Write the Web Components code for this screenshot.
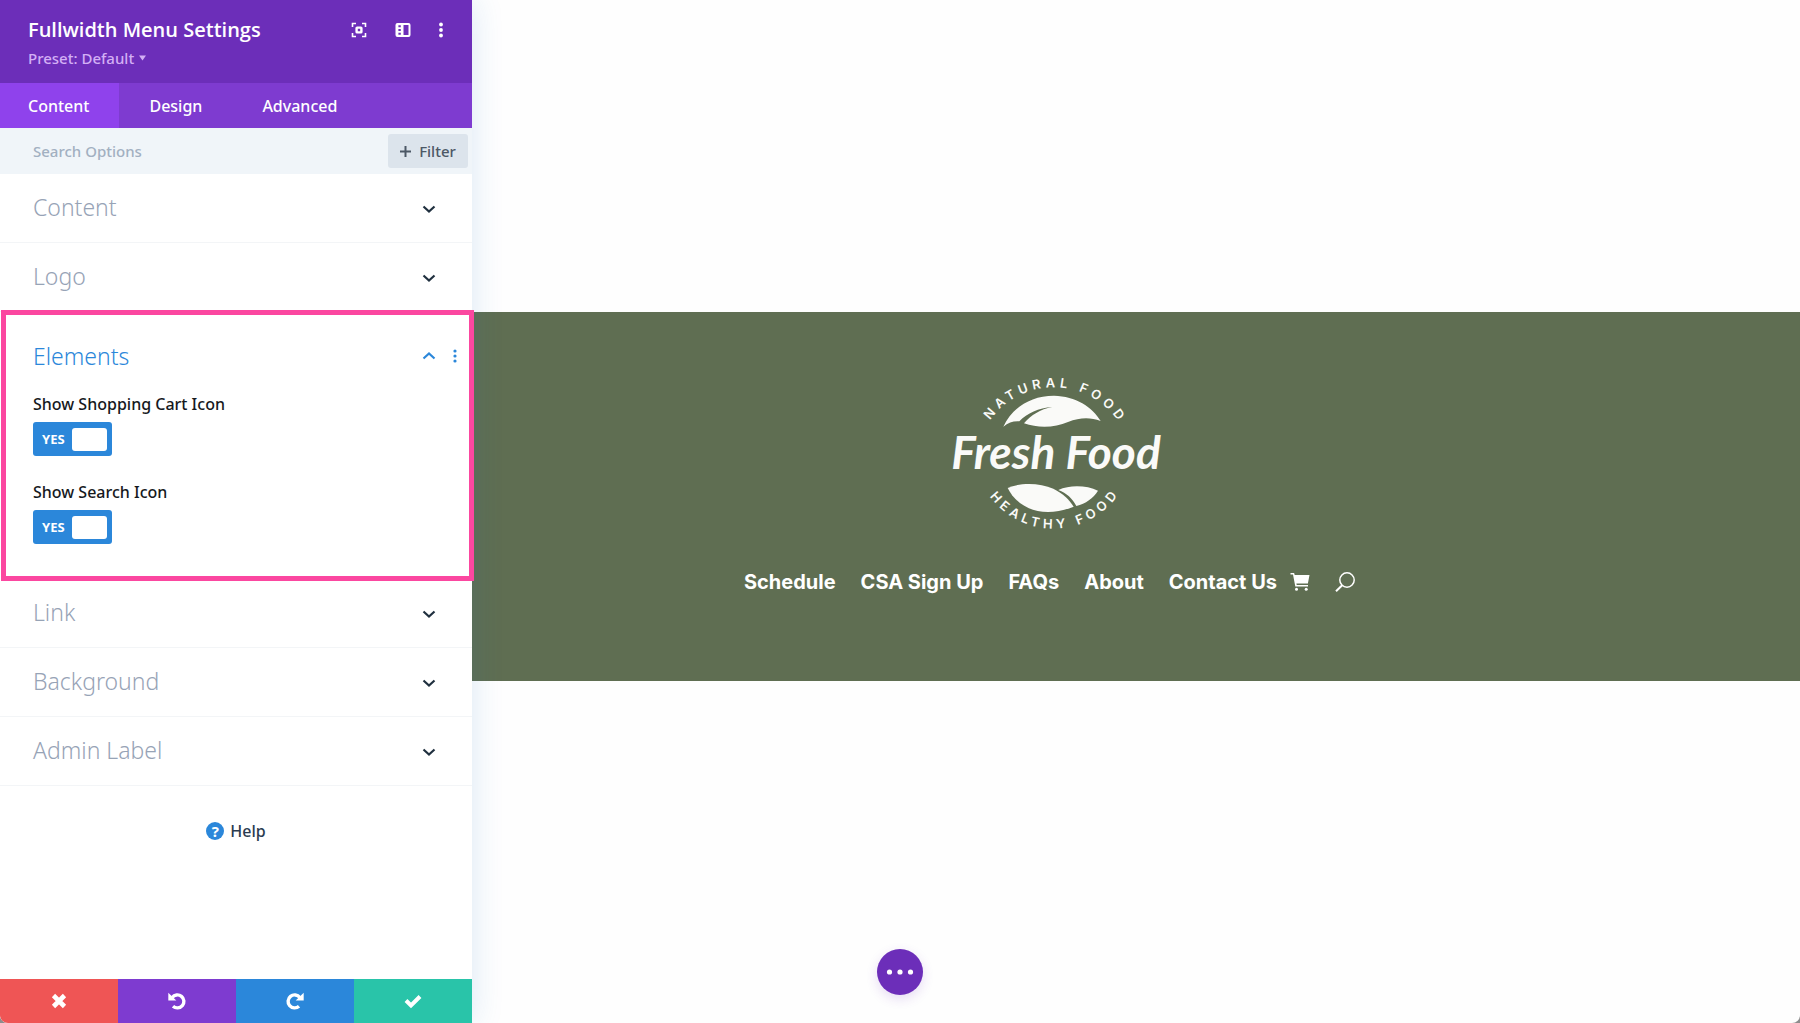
<!DOCTYPE html>
<html lang="en">
<head>
<meta charset="utf-8">
<meta name="viewport" content="width=device-width, initial-scale=1">
<title>Fullwidth Menu Settings</title>
<style>
  body {
    margin: 0;
    background: #8d8d8d;
    font-family: "Noto Sans", "Open Sans", sans-serif;
  }
</style>
</head>
<body>
<builder-app>
  <settings-panel slot="panel" heading="Fullwidth Menu Settings" preset="Default">
    <option-group label="Content"></option-group>
    <option-group label="Logo"></option-group>
    <option-group label="Elements" open>
      <yes-no-toggle label="Show Shopping Cart Icon"></yes-no-toggle>
      <yes-no-toggle label="Show Search Icon"></yes-no-toggle>
    </option-group>
    <option-group label="Link"></option-group>
    <option-group label="Background"></option-group>
    <option-group label="Admin Label"></option-group>
  </settings-panel>
  <fullwidth-menu>
    <brand-logo slot="logo"></brand-logo>
    <menu-link>Schedule</menu-link>
    <menu-link>CSA Sign Up</menu-link>
    <menu-link>FAQs</menu-link>
    <menu-link>About</menu-link>
    <menu-link>Contact Us</menu-link>
  </fullwidth-menu>
</builder-app>

<script>
class BuilderApp extends HTMLElement {
    constructor() {
        super();
        this.attachShadow({ mode: 'open' });
    }

    connectedCallback() {
        this.shadowRoot.innerHTML = `
      <style>
        :host {
          display: flex;
          min-height: 100vh;
          background: #fefefe;
          border-radius: 0 0 8px 8px;
          overflow: hidden;
        }

        ::slotted([slot="panel"]) {
          flex: 0 0 472px;
          z-index: 1;
        }

        main {
          flex: 1;
          min-width: 0;
          padding-top: 312px;
        }

        .more {
          position: fixed;
          bottom: 28px;
          left: 50%;
          margin-left: -23px;
          width: 46px;
          height: 46px;
          padding: 0;
          border: 0;
          border-radius: 50%;
          background: #6c2eb9;
          box-shadow: 0 4px 12px rgba(108, 46, 185, 0.16);
          z-index: 2;
        }

        .more svg {
          display: block;
        }
      </style>

      <slot name="panel"></slot>
      <main><slot></slot></main>
      <button class="more" aria-label="Builder options">
        <svg width="46" height="46" fill="#fff" aria-hidden="true">
          <circle cx="12.5" cy="23" r="2.6"/><circle cx="23" cy="23" r="2.6"/><circle cx="33.5" cy="23" r="2.6"/>
        </svg>
      </button>
    `;
    }
}

class SettingsPanel extends HTMLElement {
    constructor() {
        super();
        this.attachShadow({ mode: 'open' });
    }

    connectedCallback() {
        const heading = this.getAttribute('heading') || 'Settings';
        const preset = this.getAttribute('preset') || 'Default';

        this.shadowRoot.innerHTML = `
      <style>
        :host {
          display: flex;
          flex-direction: column;
          background: #fff;
          box-shadow: 0 0 30px rgba(30, 120, 200, 0.16);
        }

        button {
          font: inherit;
          color: inherit;
          border: 0;
          padding: 0;
          background: none;
          cursor: pointer;
        }

        svg {
          display: block;
        }

        header {
          display: flex;
          justify-content: space-between;
          align-items: flex-start;
          box-sizing: border-box;
          height: 83px;
          padding: 16px 29px 0 28px;
          background: #6c2eb9;
          color: #fff;
        }

        h1 {
          margin: 0;
          font-family: "Open Sans", sans-serif;
          font-size: 20px;
          line-height: 28px;
          font-weight: 600;
        }

        .preset {
          display: flex;
          align-items: center;
          gap: 5px;
          font-size: 15px;
          line-height: 28px;
          font-weight: 500;
          color: #d3aff5;
        }

        .tools {
          display: flex;
          align-items: center;
          gap: 28px;
          height: 28px;
        }

        nav {
          display: flex;
          background: #7e3bd0;
          color: #fff;
          font-size: 16px;
          font-weight: 500;
        }

        nav button {
          height: 45px;
          padding: 0 30px;
        }

        nav button:first-child {
          padding-left: 28px;
        }

        nav .active {
          background: #8f42ec;
        }

        .search {
          display: flex;
          align-items: center;
          height: 46px;
          padding: 0 4px 0 33px;
          background: #f0f5f9;
          font-size: 15px;
          font-weight: 500;
        }

        input {
          flex: 1;
          min-width: 0;
          border: 0;
          padding: 0;
          background: none;
          font: inherit;
        }

        input::placeholder {
          color: #a2b0c1;
          opacity: 1;
        }

        .filter {
          display: flex;
          align-items: center;
          justify-content: center;
          gap: 8px;
          width: 80px;
          height: 34px;
          border-radius: 3px;
          background: #dce4ec;
          color: #4c5866;
        }

        .help {
          display: flex;
          align-items: center;
          gap: 6px;
          align-self: center;
          margin-top: 33px;
          font-size: 16px;
          line-height: 24px;
          font-weight: 500;
          color: #2b3c50;
        }

        .mark {
          width: 18px;
          height: 18px;
          border-radius: 50%;
          background: #2b87da;
          color: #fff;
          font-size: 15px;
          line-height: 18px;
          font-weight: 700;
          text-align: center;
        }

        footer {
          display: grid;
          grid-template-columns: repeat(4, 1fr);
          height: 44px;
          margin-top: auto;
        }

        footer button {
          display: flex;
          align-items: center;
          justify-content: center;
        }

        .discard { background: #ef5555; }
        .undo { background: #7e3bd0; }
        .redo { background: #2b87da; }
        .save { background: #29c4a9; }
      </style>

      <header>
        <div>
          <h1>${heading}</h1>
          <button class="preset">Preset: ${preset}
            <svg width="7" height="6" fill="currentColor" aria-hidden="true"><path d="M0 0.5h7L3.5 5.5z"/></svg>
          </button>
        </div>
        <div class="tools">
          <button aria-label="Expand">
            <svg width="16" height="16" fill="none" stroke="#fff" stroke-width="1.6">
              <path d="M1.5 5V1.5H5M11 1.5h3.5V5M14.5 11v3.5H11M5 14.5H1.5V11"/>
              <rect x="5.6" y="5.6" width="4.8" height="4.8" rx="0.5" stroke-width="2.4"/>
            </svg>
          </button>
          <button aria-label="Dock panel">
            <svg width="16" height="16">
              <path fill="#fff" fill-rule="evenodd" d="M2.5 1h11a2 2 0 0 1 2 2v10a2 2 0 0 1-2 2h-11a2 2 0 0 1-2-2V3a2 2 0 0 1 2-2zM8.5 3v10h5V3zM3.4 3.3v2h2.4v-2zM3.4 7v2h2.4V7zM3.4 10.700v2h2.400v-2z"/>
            </svg>
          </button>
          <button aria-label="More settings">
            <svg width="4" height="16" fill="#fff">
              <circle cx="2" cy="2.5" r="1.9"/><circle cx="2" cy="8" r="1.9"/><circle cx="2" cy="13.5" r="1.9"/>
            </svg>
          </button>
        </div>
      </header>
      <nav>
        <button class="active">Content</button>
        <button>Design</button>
        <button>Advanced</button>
      </nav>
      <div class="search">
        <input type="text" placeholder="Search Options" aria-label="Search Options">
        <button class="filter">
          <svg width="11" height="11" stroke="currentColor" stroke-width="2" aria-hidden="true"><path d="M5.5 0v11M0 5.5h11"/></svg>
          Filter
        </button>
      </div>
      <slot></slot>
      <button class="help"><span class="mark">?</span>Help</button>
      <footer>
        <button class="discard" aria-label="Discard">
          <svg width="16" height="16" stroke="#fff" stroke-width="4.6"><path d="M2.5 2.5l11 11M13.5 2.5l-11 11"/></svg>
        </button>
        <button class="undo" aria-label="Undo">
          <svg width="20" height="20"><path fill="none" stroke="#fff" stroke-width="3.4" d="M5.2 6.5A6.5 6.5 0 1 1 6 15.2"/><path fill="#fff" d="M1.3 1.8v7.8h8z"/></svg>
        </button>
        <button class="redo" aria-label="Redo">
          <svg width="20" height="20"><path fill="none" stroke="#fff" stroke-width="3.4" d="M14.8 6.5A6.5 6.5 0 1 0 14 15.2"/><path fill="#fff" d="M18.7 1.8v7.8h-8z"/></svg>
        </button>
        <button class="save" aria-label="Save">
          <svg width="18" height="16" fill="none" stroke="#fff" stroke-width="4"><path d="M2 7.5l5 5L16 3.5"/></svg>
        </button>
      </footer>
    `;
    }
}

class OptionGroup extends HTMLElement {
    constructor() {
        super();
        this.attachShadow({ mode: 'open' });
    }

    connectedCallback() {
        const label = this.getAttribute('label') || '';
        const open = this.hasAttribute('open');
        const chevron = open ? 'M1.5 7.5L7 2.5l5.5 5' : 'M1.5 2.5L7 7.5l5.5-5';

        this.shadowRoot.innerHTML = `
      <style>
        :host {
          display: block;
          box-sizing: border-box;
          height: 69px;
          border-bottom: 1px solid #f3f5f7;
          color: #97a3b6;
        }

        /* the open group is framed and overlaps its neighbours' borders */
        :host([open]) {
          position: relative;
          height: auto;
          margin: -2px -2px -2px 1px;
          border: 5px solid #fb47a0;
          padding-bottom: 32px;
          background: #fff;
          color: #2b87da;
        }

        h2 {
          display: flex;
          align-items: center;
          box-sizing: border-box;
          margin: 0;
          height: 68px;
          padding: 0 36px 2px 33px;
          font-size: 23px;
          font-weight: 300;
        }

        :host([open]) h2 {
          height: 76px;
          padding: 6px 11px 0 27px;
        }

        button {
          font: inherit;
          color: inherit;
          border: 0;
          padding: 0;
          background: none;
          cursor: pointer;
        }

        .toggle {
          flex: 1;
          display: flex;
          align-items: center;
          justify-content: space-between;
        }

        svg {
          display: block;
        }

        .chevron {
          margin-top: 3px;
          stroke: #20303f;
        }

        :host([open]) .chevron {
          margin-top: 0;
          stroke: #2b87da;
        }

        .menu {
          margin-left: 16px;
        }

        .body {
          display: flex;
          flex-direction: column;
          gap: 24px;
          padding: 1px 27px 0;
        }
      </style>

      <h2>
        <button class="toggle" aria-expanded="${open}">${label}
          <svg class="chevron" width="14" height="10" fill="none" stroke-width="2.2" aria-hidden="true"><path d="${chevron}"/></svg>
        </button>
        ${open ? `<button class="menu" aria-label="${label} options">
          <svg width="6" height="14" fill="#2b87da"><circle cx="3" cy="2" r="1.6"/><circle cx="3" cy="7" r="1.6"/><circle cx="3" cy="12" r="1.6"/></svg>
        </button>` : ''}
      </h2>
      ${open ? '<div class="body"><slot></slot></div>' : ''}
    `;
    }
}

class YesNoToggle extends HTMLElement {
    constructor() {
        super();
        this.attachShadow({ mode: 'open' });
    }

    connectedCallback() {
        const label = this.getAttribute('label') || '';

        this.shadowRoot.innerHTML = `
      <style>
        :host {
          display: block;
          color: #16191d;
          font-size: 16px;
        }

        label {
          display: block;
          width: max-content;
          font-weight: 500;
          line-height: 24px;
        }

        .switch {
          display: flex;
          align-items: center;
          justify-content: space-between;
          position: relative;
          box-sizing: border-box;
          width: 79px;
          height: 34px;
          margin-top: 6px;
          padding: 0 5px 0 9px;
          border-radius: 3px;
          background: #2b87da;
          color: #fff;
          font-size: 13px;
          font-weight: 700;
        }

        /* native box covers the whole switch, invisible */
        input {
          position: absolute;
          inset: 0;
          width: 100%;
          height: 100%;
          margin: 0;
          opacity: 0;
          cursor: pointer;
        }

        .knob {
          width: 35px;
          height: 23px;
          border-radius: 3px;
          background: #fff;
        }
      </style>

      <label for="box">${label}</label>
      <div class="switch">
        <span>YES</span>
        <span class="knob"></span>
        <input id="box" type="checkbox" role="switch" checked>
      </div>
    `;
    }
}

class FullwidthMenu extends HTMLElement {
    constructor() {
        super();
        this.attachShadow({ mode: 'open' });
    }

    connectedCallback() {
        this.shadowRoot.innerHTML = `
      <style>
        :host {
          display: flex;
          flex-direction: column;
          align-items: center;
          gap: 36px;
          padding: 61px 173px 87px 0;
          background: #5f6e52;
          color: #fff;
        }

        ::slotted([slot="logo"]) {
          margin-left: 12px;
        }

        nav {
          display: flex;
          align-items: center;
          gap: 25px;
          height: 25px;
          font-family: Inter, sans-serif;
          font-size: 20px;
          font-weight: 700;
        }

        .icons {
          display: flex;
          gap: 25px;
          margin-left: -12px;
        }

        button {
          border: 0;
          padding: 0;
          background: none;
          cursor: pointer;
        }

        svg {
          display: block;
        }
      </style>

      <slot name="logo"></slot>
      <nav>
        <slot></slot>
        <div class="icons">
          <button aria-label="Cart">
            <svg width="20" height="20" fill="#fff">
              <path d="M0.5 1h3.6l0.6 2h14.8l-1.6 8.5H6.4l0.3 1.5H18v1.500H5.300L3 2.500H0.500z"/>
              <circle cx="6.5" cy="17.3" r="1.5"/><circle cx="16.2" cy="17.3" r="1.5"/>
            </svg>
          </button>
          <button aria-label="Search">
            <svg width="20" height="20" fill="none" stroke="#fff">
              <circle cx="12" cy="8" r="7.2" stroke-width="1.5"/><path d="M7.2 13.2L1 19.2" stroke-width="2"/>
            </svg>
          </button>
        </div>
      </nav>
    `;
    }
}

class MenuLink extends HTMLElement {
    constructor() {
        super();
        this.attachShadow({ mode: 'open' });
    }

    connectedCallback() {
        this.shadowRoot.innerHTML = `
      <style>
        :host {
          display: block;
        }

        a {
          color: inherit;
          text-decoration: none;
          white-space: nowrap;
        }
      </style>
      <a href="#"><slot></slot></a>
    `;
    }
}

class BrandLogo extends HTMLElement {
    constructor() {
        super();
        this.attachShadow({ mode: 'open' });
    }

    connectedCallback() {
        this.shadowRoot.innerHTML = `
      <style>
        :host {
          display: block;
        }

        svg {
          display: block;
        }

        .ring {
          font: 600 39px Inter, sans-serif;
          letter-spacing: 13px;
        }

        .name {
          font: italic 700 138px Lato, sans-serif;
        }
      </style>

      <svg width="212" height="160" viewBox="60 40 636 480" fill="#fafaf8">
        <defs>
          <path id="top" d="M137 317a234 234 0 0 1 468 0"/>
          <path id="bottom" d="M133 270a237 237 0 0 0 474 0"/>
        </defs>
        <text class="ring" text-anchor="middle"><textPath href="#top" startOffset="51%">NATURAL FOOD</textPath></text>
        <path d="M220 201C246 146 300 108 372 108C437 110 487 141 512 184C480 172 450 173 414 187C375 204 325 206 282 191C304 166 330 149 367 142C325 145 292 160 268 185C250 184 235 188 220 201z"/>
        <text class="name" x="378" y="327" text-anchor="middle">Fresh Food</text>
        <path d="M233 385C275 367 330 370 370 387C400 402 418 420 431 441C345 475 267 453 233 385z"/>
        <path d="M385 391C420 375 470 377 504 393C490 415 467 432 439 439C427 417 410 400 385 391z"/>
        <text class="ring" text-anchor="middle"><textPath href="#bottom" startOffset="51%">HEALTHY FOOD</textPath></text>
      </svg>
    `;
    }
}

customElements.define('builder-app', BuilderApp);
customElements.define('settings-panel', SettingsPanel);
customElements.define('option-group', OptionGroup);
customElements.define('yes-no-toggle', YesNoToggle);
customElements.define('fullwidth-menu', FullwidthMenu);
customElements.define('menu-link', MenuLink);
customElements.define('brand-logo', BrandLogo);
</script>
</body>
</html>
